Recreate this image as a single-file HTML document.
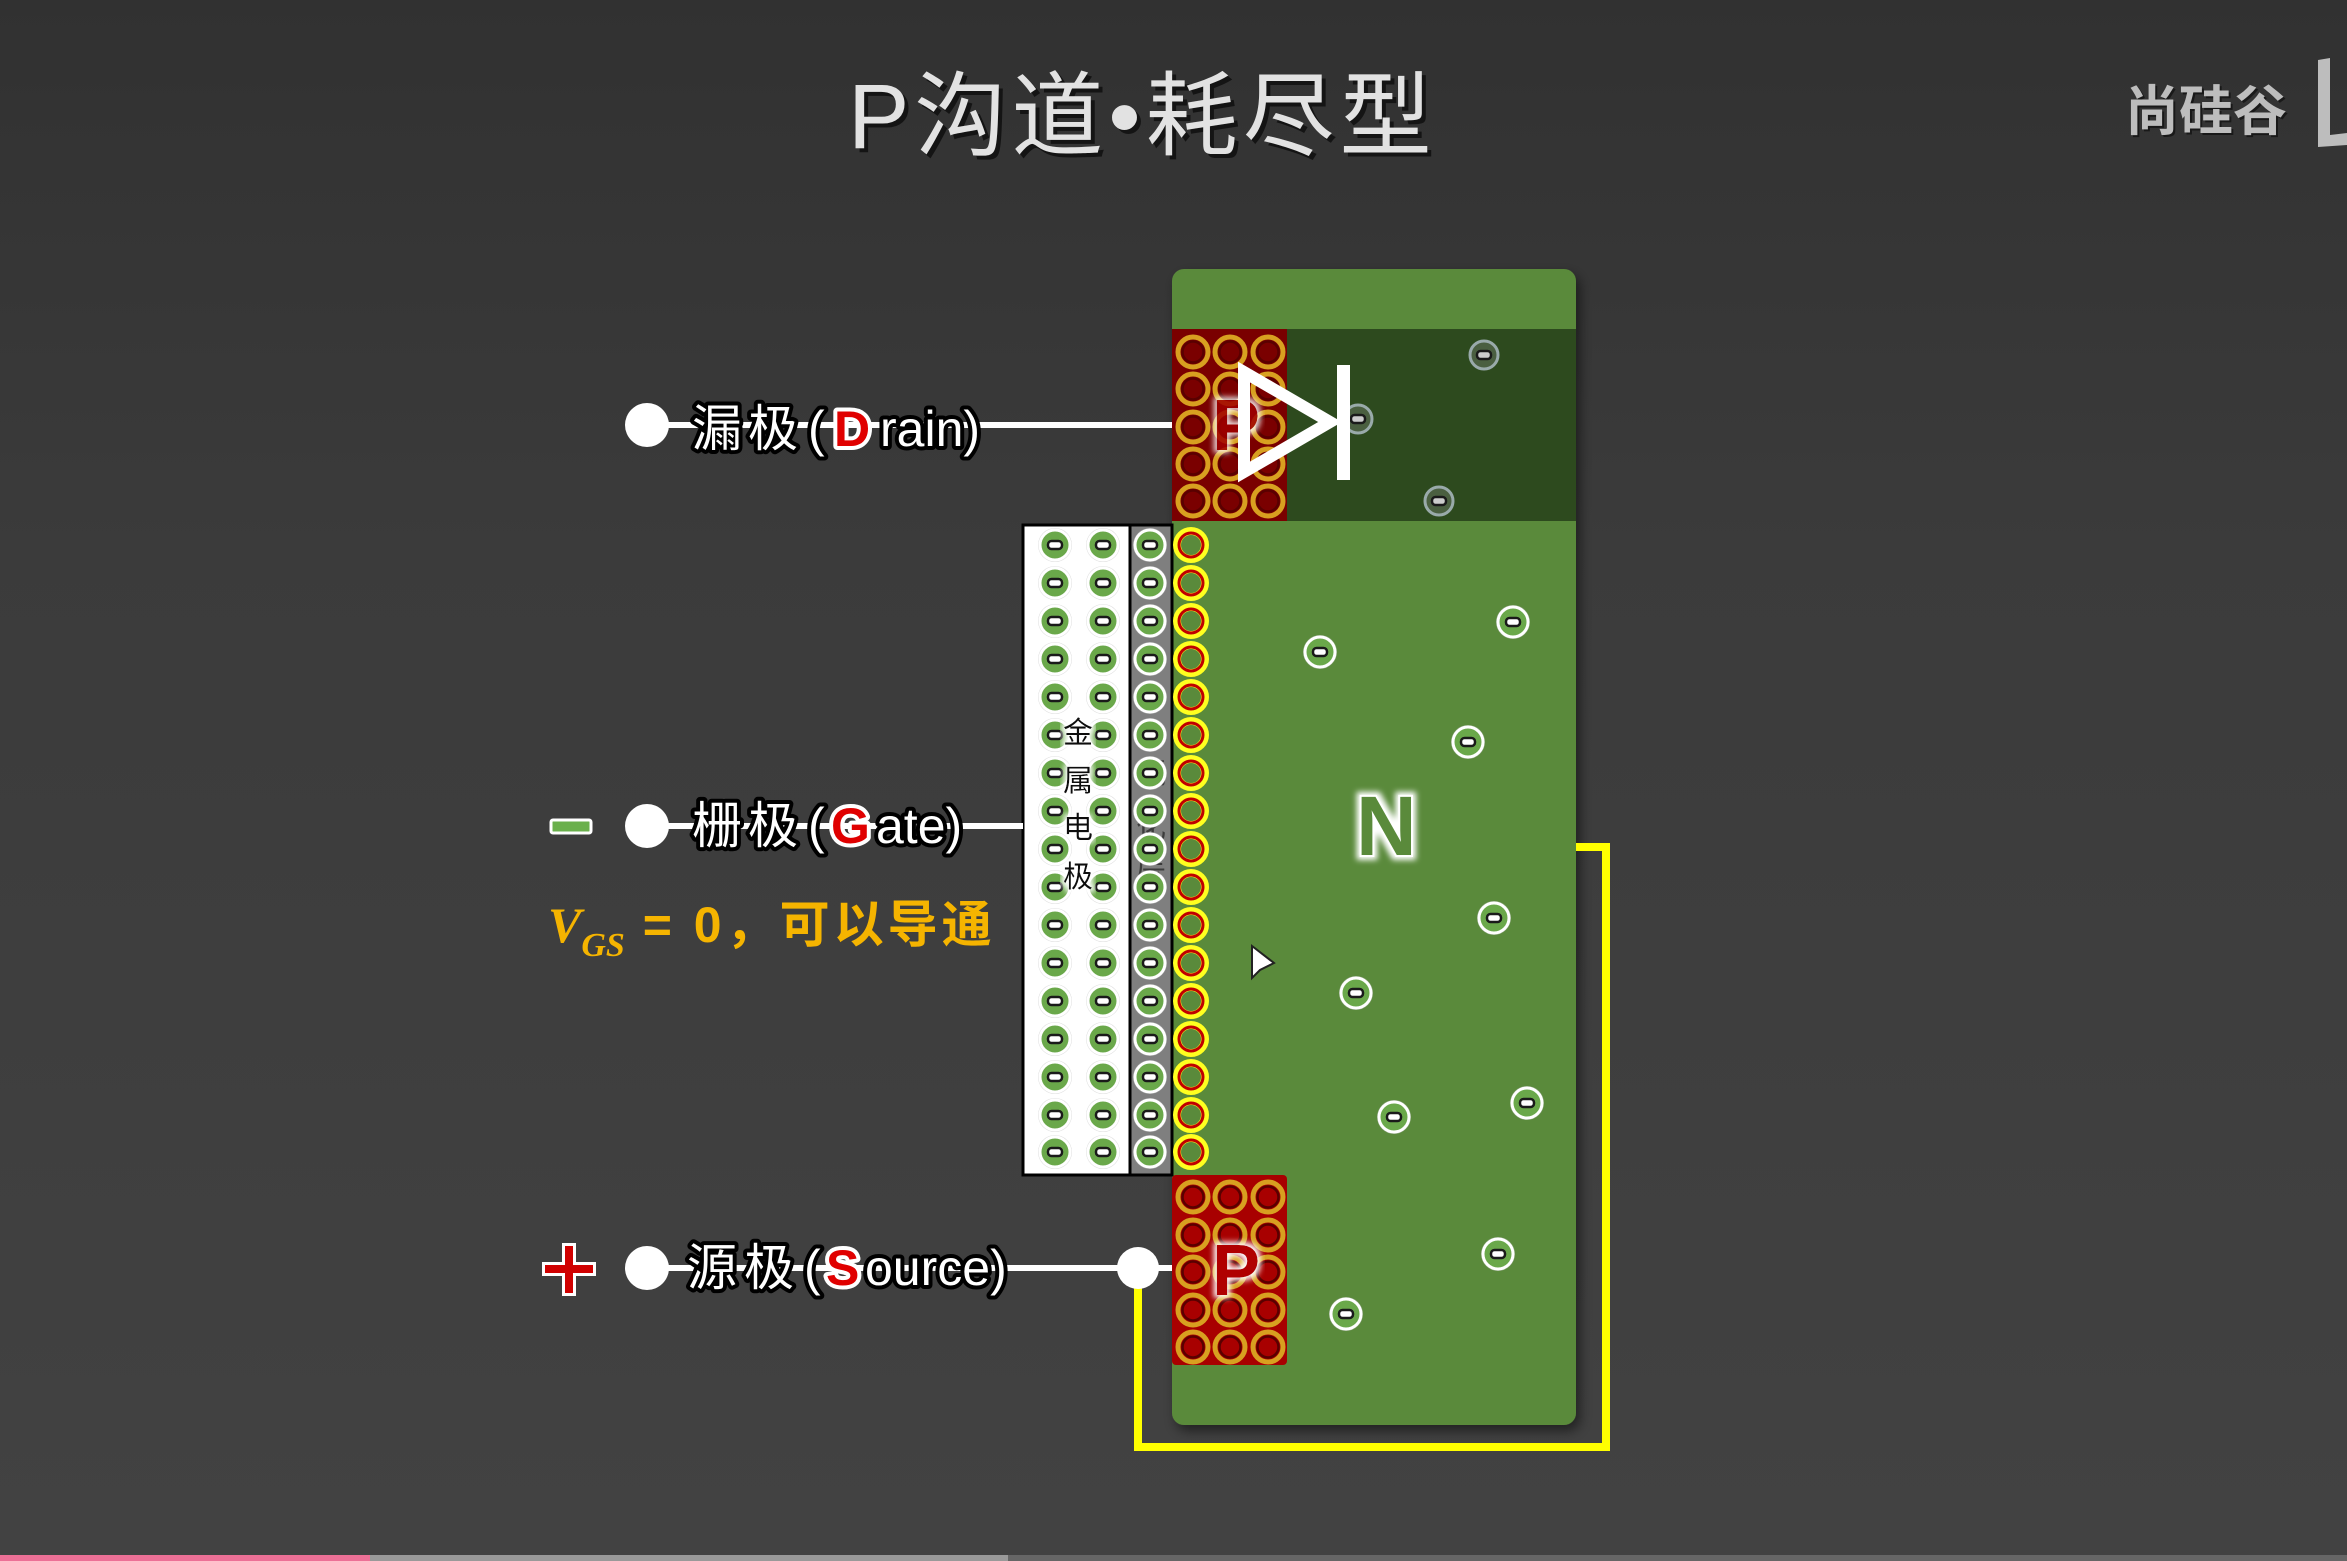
<!DOCTYPE html>
<html><head><meta charset="utf-8"><style>
html,body{margin:0;padding:0;width:2347px;height:1561px;overflow:hidden;background:#3d3d3d;}
svg{display:block}
text{font-family:"Liberation Sans","Noto Sans CJK SC",sans-serif;}
</style></head><body>
<svg width="2347" height="1561" viewBox="0 0 2347 1561" xmlns="http://www.w3.org/2000/svg">
<defs>
<linearGradient id="bg" x1="0" y1="0" x2="0" y2="1">
<stop offset="0" stop-color="#313131"/><stop offset="0.35" stop-color="#3b3b3b"/><stop offset="1" stop-color="#424242"/>
</linearGradient>
<symbol id="e" viewBox="-20 -20 40 40" overflow="visible">
<circle r="17" fill="#bbb" opacity="0.5"/>
<circle r="15" fill="#6aa84a" stroke="#fff" stroke-width="3"/>
<rect x="-7" y="-4" width="14" height="8" rx="3.5" fill="#fff" stroke="#1a1a1a" stroke-width="2.5"/>
</symbol>
<symbol id="ed" viewBox="-20 -20 40 40" overflow="visible">
<circle r="14" fill="#4a5f40" stroke="#9aa" stroke-width="3"/>
<rect x="-7" y="-4" width="14" height="8" rx="3.5" fill="#ccc" stroke="#1a1a1a" stroke-width="2.5"/>
</symbol>
<symbol id="h" viewBox="-20 -20 40 40" overflow="visible">
<circle r="14" fill="none" stroke="#ffff20" stroke-width="8"/>
<circle r="12" fill="none" stroke="#c00000" stroke-width="3"/>
</symbol>
<symbol id="g" viewBox="-20 -20 40 40" overflow="visible">
<circle r="15" fill="none" stroke="#d8a020" stroke-width="5"/>
<circle r="10.5" fill="none" stroke="#5a0000" stroke-width="2.5"/>
</symbol>
<filter id="sh" x="-10%" y="-10%" width="120%" height="120%"><feDropShadow dx="4" dy="6" stdDeviation="6" flood-color="#000" flood-opacity="0.5"/></filter>
<filter id="glow"><feMorphology operator="dilate" radius="3" in="SourceAlpha" result="d"/><feGaussianBlur in="d" stdDeviation="3" result="b"/><feFlood flood-color="#fff"/><feComposite in2="b" operator="in" result="w"/><feMerge><feMergeNode in="w"/><feMergeNode in="SourceGraphic"/></feMerge></filter>
</defs>
<rect width="2347" height="1561" fill="url(#bg)"/>

<!-- title -->
<text x="852" y="152" font-size="92" letter-spacing="5" fill="#000" opacity="0.6">P沟道•耗尽型</text>
<text x="848" y="148" font-size="92" letter-spacing="5" fill="#e2e2e2">P沟道•耗尽型</text>
<text x="2127" y="132" font-size="54" font-weight="bold" fill="#000" opacity="0.5">尚硅谷</text>
<text x="2125" y="130" font-size="54" font-weight="bold" fill="#bdbdbd">尚硅谷</text>
<path d="M2318 60 L2330 58 L2330 135 L2347 133 L2347 145 L2318 147 Z" fill="#bdbdbd"/>

<!-- main green body -->
<rect x="1172" y="269" width="404" height="1156" rx="12" fill="#5a8a3a" filter="url(#sh)"/>
<rect x="1172" y="329" width="404" height="192" fill="#2d4a1e"/>

<!-- drain P -->
<rect x="1172" y="329" width="115" height="192" fill="#7a0000"/>
<g>
<use href="#g" x="1173" y="332" width="40" height="40"/><use href="#g" x="1210" y="332" width="40" height="40"/><use href="#g" x="1248" y="332" width="40" height="40"/>
<use href="#g" x="1173" y="369" width="40" height="40"/><use href="#g" x="1210" y="369" width="40" height="40"/><use href="#g" x="1248" y="369" width="40" height="40"/>
<use href="#g" x="1173" y="407" width="40" height="40"/><use href="#g" x="1210" y="407" width="40" height="40"/><use href="#g" x="1248" y="407" width="40" height="40"/>
<use href="#g" x="1173" y="444" width="40" height="40"/><use href="#g" x="1210" y="444" width="40" height="40"/><use href="#g" x="1248" y="444" width="40" height="40"/>
<use href="#g" x="1173" y="481" width="40" height="40"/><use href="#g" x="1210" y="481" width="40" height="40"/><use href="#g" x="1248" y="481" width="40" height="40"/>
</g>
<text x="1212" y="450" font-size="72" font-weight="bold" fill="#a00000" filter="url(#glow)" opacity="0.85">P</text>
<use href="#ed" x="1464" y="335" width="40" height="40"/>
<use href="#ed" x="1338" y="399" width="40" height="40"/>
<use href="#ed" x="1419" y="481" width="40" height="40"/>
<!-- diode -->
<path d="M1244 372 L1244 472 L1330 422 Z" fill="none" stroke="#fff" stroke-width="12" stroke-linejoin="miter"/>
<rect x="1337" y="365" width="13" height="115" fill="#fff"/>

<!-- metal & oxide -->
<rect x="1023" y="525" width="107" height="650" fill="#fff" stroke="#000" stroke-width="3"/>
<rect x="1130" y="525" width="42" height="650" fill="#7f7f7f" stroke="#000" stroke-width="3"/>
<text font-size="30" fill="#111" text-anchor="middle" opacity="0.6"><tspan x="1151" y="783">氧</tspan><tspan x="1151" y="838">化</tspan><tspan x="1151" y="877">层</tspan></text>

<!-- source P -->
<rect x="1172" y="1175" width="115" height="190" rx="4" fill="#a80000"/>
<g>
<use href="#g" x="1173" y="1177" width="40" height="40"/><use href="#g" x="1210" y="1177" width="40" height="40"/><use href="#g" x="1248" y="1177" width="40" height="40"/>
<use href="#g" x="1173" y="1215" width="40" height="40"/><use href="#g" x="1210" y="1215" width="40" height="40"/><use href="#g" x="1248" y="1215" width="40" height="40"/>
<use href="#g" x="1173" y="1252" width="40" height="40"/><use href="#g" x="1210" y="1252" width="40" height="40"/><use href="#g" x="1248" y="1252" width="40" height="40"/>
<use href="#g" x="1173" y="1290" width="40" height="40"/><use href="#g" x="1210" y="1290" width="40" height="40"/><use href="#g" x="1248" y="1290" width="40" height="40"/>
<use href="#g" x="1173" y="1327" width="40" height="40"/><use href="#g" x="1210" y="1327" width="40" height="40"/><use href="#g" x="1248" y="1327" width="40" height="40"/>
</g>
<text x="1212" y="1295" font-size="72" font-weight="bold" fill="#b00000" filter="url(#glow)">P</text>

<!-- free electrons -->
<use href="#e" x="1300" y="632" width="40" height="40"/>
<use href="#e" x="1493" y="602" width="40" height="40"/>
<use href="#e" x="1448" y="722" width="40" height="40"/>
<use href="#e" x="1474" y="898" width="40" height="40"/>
<use href="#e" x="1336" y="973" width="40" height="40"/>
<use href="#e" x="1374" y="1097" width="40" height="40"/>
<use href="#e" x="1507" y="1083" width="40" height="40"/>
<use href="#e" x="1478" y="1234" width="40" height="40"/>
<use href="#e" x="1326" y="1294" width="40" height="40"/>

<text x="1356" y="855" font-size="84" font-weight="bold" fill="#5a8a3a" stroke="#fff" stroke-width="4" paint-order="stroke" filter="url(#glow)">N</text>

<!-- cursor -->
<path d="M1252 946 L1252 978 L1260 970 L1274 963 Z" fill="#fff" stroke="#222" stroke-width="2"/>

<!-- wires -->
<line x1="647" y1="425" x2="1172" y2="425" stroke="#fff" stroke-width="6"/>
<line x1="647" y1="826" x2="1023" y2="826" stroke="#fff" stroke-width="6"/>
<line x1="647" y1="1268" x2="1172" y2="1268" stroke="#fff" stroke-width="6"/>
<path d="M1138 1268 L1138 1447 L1606 1447 L1606 847 L1576 847" fill="none" stroke="#ffff00" stroke-width="8"/>
<circle cx="647" cy="425" r="22" fill="#fff"/>
<circle cx="647" cy="826" r="22" fill="#fff"/>
<circle cx="647" cy="1268" r="22" fill="#fff"/>
<circle cx="1138" cy="1268" r="21" fill="#fff"/>

<!-- labels -->
<g font-size="50" fill="#fff" stroke="#000" stroke-width="8" paint-order="stroke" stroke-linejoin="round">
<text x="692" y="446">漏</text><text x="748" y="446">极</text><text x="808" y="446">(</text>
<text x="834" y="446" fill="#e00000" font-weight="bold" stroke="#fff">D</text><text x="880" y="446">rain)</text>
<text x="692" y="843">栅</text><text x="748" y="843">极</text><text x="808" y="843">(</text>
<text x="831" y="843" fill="#e00000" font-weight="bold" stroke="#fff">G</text><text x="876" y="843">ate)</text>
<text x="687" y="1285">源</text><text x="744" y="1285">极</text><text x="804" y="1285">(</text>
<text x="826" y="1285" fill="#e00000" font-weight="bold" stroke="#fff">S</text><text x="865" y="1285">ource)</text>
</g>
<rect x="551" y="820" width="40" height="13" rx="2" fill="#6ab04c" stroke="#fff" stroke-width="3"/>
<path d="M542 1269 H596 M569 1243 V1296" stroke="#fff" stroke-width="14"/>
<path d="M545 1269 H593 M569 1246 V1293" stroke="#d00000" stroke-width="8"/>

<text x="548" y="942" font-size="50" font-weight="bold" fill="#f5b400"><tspan font-family="Liberation Serif,serif" font-style="italic">V</tspan><tspan font-family="Liberation Serif,serif" font-style="italic" font-size="34" dy="14">GS</tspan><tspan dy="-14" letter-spacing="4">  = 0，可以导通</tspan></text>

<!-- progress bar -->
<rect x="0" y="1555" width="2347" height="6" fill="#666"/>
<rect x="0" y="1555" width="1008" height="6" fill="#999"/>
<rect x="0" y="1555" width="370" height="6" fill="#ec7096"/>

<!-- electron columns -->
<g>
<use href="#e" x="1035" y="525" width="40" height="40"/><use href="#e" x="1083" y="525" width="40" height="40"/><use href="#e" x="1130" y="525" width="40" height="40"/><use href="#h" x="1171" y="525" width="40" height="40"/>
<use href="#e" x="1035" y="563" width="40" height="40"/><use href="#e" x="1083" y="563" width="40" height="40"/><use href="#e" x="1130" y="563" width="40" height="40"/><use href="#h" x="1171" y="563" width="40" height="40"/>
<use href="#e" x="1035" y="601" width="40" height="40"/><use href="#e" x="1083" y="601" width="40" height="40"/><use href="#e" x="1130" y="601" width="40" height="40"/><use href="#h" x="1171" y="601" width="40" height="40"/>
<use href="#e" x="1035" y="639" width="40" height="40"/><use href="#e" x="1083" y="639" width="40" height="40"/><use href="#e" x="1130" y="639" width="40" height="40"/><use href="#h" x="1171" y="639" width="40" height="40"/>
<use href="#e" x="1035" y="677" width="40" height="40"/><use href="#e" x="1083" y="677" width="40" height="40"/><use href="#e" x="1130" y="677" width="40" height="40"/><use href="#h" x="1171" y="677" width="40" height="40"/>
<use href="#e" x="1035" y="715" width="40" height="40"/><use href="#e" x="1083" y="715" width="40" height="40"/><use href="#e" x="1130" y="715" width="40" height="40"/><use href="#h" x="1171" y="715" width="40" height="40"/>
<use href="#e" x="1035" y="753" width="40" height="40"/><use href="#e" x="1083" y="753" width="40" height="40"/><use href="#e" x="1130" y="753" width="40" height="40"/><use href="#h" x="1171" y="753" width="40" height="40"/>
<use href="#e" x="1035" y="791" width="40" height="40"/><use href="#e" x="1083" y="791" width="40" height="40"/><use href="#e" x="1130" y="791" width="40" height="40"/><use href="#h" x="1171" y="791" width="40" height="40"/>
<use href="#e" x="1035" y="829" width="40" height="40"/><use href="#e" x="1083" y="829" width="40" height="40"/><use href="#e" x="1130" y="829" width="40" height="40"/><use href="#h" x="1171" y="829" width="40" height="40"/>
<use href="#e" x="1035" y="867" width="40" height="40"/><use href="#e" x="1083" y="867" width="40" height="40"/><use href="#e" x="1130" y="867" width="40" height="40"/><use href="#h" x="1171" y="867" width="40" height="40"/>
<use href="#e" x="1035" y="905" width="40" height="40"/><use href="#e" x="1083" y="905" width="40" height="40"/><use href="#e" x="1130" y="905" width="40" height="40"/><use href="#h" x="1171" y="905" width="40" height="40"/>
<use href="#e" x="1035" y="943" width="40" height="40"/><use href="#e" x="1083" y="943" width="40" height="40"/><use href="#e" x="1130" y="943" width="40" height="40"/><use href="#h" x="1171" y="943" width="40" height="40"/>
<use href="#e" x="1035" y="981" width="40" height="40"/><use href="#e" x="1083" y="981" width="40" height="40"/><use href="#e" x="1130" y="981" width="40" height="40"/><use href="#h" x="1171" y="981" width="40" height="40"/>
<use href="#e" x="1035" y="1019" width="40" height="40"/><use href="#e" x="1083" y="1019" width="40" height="40"/><use href="#e" x="1130" y="1019" width="40" height="40"/><use href="#h" x="1171" y="1019" width="40" height="40"/>
<use href="#e" x="1035" y="1057" width="40" height="40"/><use href="#e" x="1083" y="1057" width="40" height="40"/><use href="#e" x="1130" y="1057" width="40" height="40"/><use href="#h" x="1171" y="1057" width="40" height="40"/>
<use href="#e" x="1035" y="1095" width="40" height="40"/><use href="#e" x="1083" y="1095" width="40" height="40"/><use href="#e" x="1130" y="1095" width="40" height="40"/><use href="#h" x="1171" y="1095" width="40" height="40"/>
<use href="#e" x="1035" y="1132" width="40" height="40"/><use href="#e" x="1083" y="1132" width="40" height="40"/><use href="#e" x="1130" y="1132" width="40" height="40"/><use href="#h" x="1171" y="1132" width="40" height="40"/>
</g>
<text font-size="30" fill="#111" text-anchor="middle" filter="url(#glow)"><tspan x="1078" y="743">金</tspan><tspan x="1078" y="791">属</tspan><tspan x="1078" y="838">电</tspan><tspan x="1078" y="887">极</tspan></text>
</svg>
</body></html>
